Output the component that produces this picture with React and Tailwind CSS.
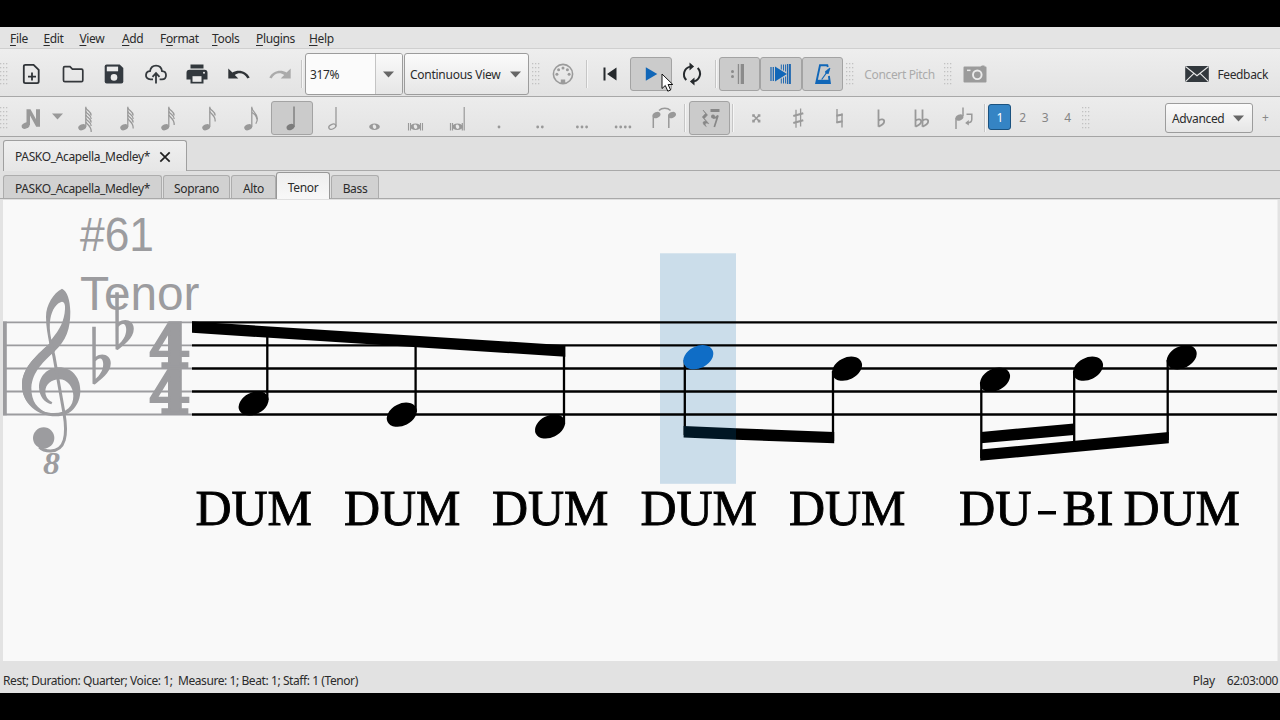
import clsx from "clsx"

const MENUS = [
  { pre: "", key: "F", rest: "ile", width: "w-[33.5px]" },
  { pre: "", key: "E", rest: "dit", width: "w-9" },
  { pre: "", key: "V", rest: "iew", width: "w-[42.5px]" },
  { pre: "", key: "A", rest: "dd", width: "w-[38px]" },
  { pre: "F", key: "o", rest: "rmat", width: "w-[52px]" },
  { pre: "", key: "T", rest: "ools", width: "w-[44px]" },
  { pre: "", key: "P", rest: "lugins", width: "w-[53px]" },
  { pre: "", key: "H", rest: "elp", width: "w-[40px]" },
]

const Grip = ({ className }) => (
  <svg className={clsx("h-6 w-2 shrink-0", className)} viewBox="0 0 8 24" fill="#c2c2c2">
    {[1, 5, 9, 13, 17, 21].map((y) => (
      <g key={y}>
        <rect x="0" y={y} width="1.3" height="1.3" />
        <rect x="3" y={y} width="1.3" height="1.3" />
        <rect x="6" y={y} width="1.3" height="1.3" />
      </g>
    ))}
  </svg>
)

const Divider = () => <div className="h-7 w-[2px] shrink-0 border-l border-[#c6c6c6] bg-[#f6f6f6]" />

const Slot = ({ children, active, className }) => (
  <div
    className={clsx(
      "flex shrink-0 items-center justify-center",
      active && "rounded-[3px] border border-[#a3a3a3] bg-[#cbcbcb]",
      className
    )}
  >
    {children}
  </div>
)

const Arrow = ({ className }) => (
  <svg className={clsx("h-[7px] w-[11px] shrink-0", className)} viewBox="0 0 11 7">
    <path d="M0 .4h11L5.5 6.6z" fill="currentColor" />
  </svg>
)

const Glyph = ({ children }) => (
  <svg className="h-6 w-6 shrink-0 overflow-visible" viewBox="0 0 24 24" fill="none">
    {children}
  </svg>
)

const NewIcon = () => (
  <Glyph>
    <path d="M5.4 2.8h8.2l5.1 5v11.8q0 1.6-1.6 1.6H5.4q-1.6 0-1.6-1.6V4.4q0-1.6 1.6-1.6z" stroke="#2f3337" strokeWidth="1.8" />
    <path d="M12 10.6v8M8 14.6h8" stroke="#2f3337" strokeWidth="1.8" />
  </Glyph>
)

const OpenIcon = () => (
  <Glyph>
    <path d="M3.8 4.6H9l2.4 2.5h9.1q1.3 0 1.3 1.3v9.8q0 1.5-1.4 1.5H3.9q-1.4 0-1.4-1.5V6q0-1.4 1.3-1.4z" stroke="#34373b" strokeWidth="1.7" />
  </Glyph>
)

const SaveIcon = () => (
  <Glyph>
    <path d="M4.6 2.5h13.1l3.6 3.6v13.5q0 1.9-1.9 1.9H4.6q-1.9 0-1.9-1.9V4.4q0-1.9 1.9-1.9z" fill="#343a40" />
    <path d="M4.8 4.6h11.3v4.7H4.8z" fill="#ebebeb" />
    <circle cx="12" cy="15.4" r="3.3" fill="#ebebeb" />
  </Glyph>
)

const CloudIcon = () => (
  <Glyph>
    <path d="M9 17.3H6.4C3.2 17.3 1.8 15.2 2 13c.2-2.1 1.8-3.8 4-3.8C6.6 5.8 9 3.6 12 3.6c3.2 0 5.6 2.3 6 5.5 2.2.1 4 1.7 4 4.1s-1.6 4.1-4 4.1h-2.4" stroke="#34393d" strokeWidth="1.8" />
    <path d="M12 21.5v-10M8.5 14.8l3.5-3.7 3.5 3.7" stroke="#34393d" strokeWidth="1.8" />
  </Glyph>
)

const PrintIcon = () => (
  <Glyph>
    <path d="M5.5 2.5h13v4h-13z" fill="#32383d" />
    <path d="M4.5 7.8h15q3 0 3 3v6.6h-4v4.1h-13v-4.1h-4v-6.6q0-3 3-3z" fill="#32383d" />
    <path d="M7.500 14.200h9v5.600h-9z" fill="#ebebeb" />
    <circle cx="19" cy="10.8" r="1" fill="#ebebeb" />
  </Glyph>
)

const UndoIcon = () => (
  <Glyph>
    <path d="M1.3 6.600v10h10l-3.500-3.600c4-3.300 9.700-2.300 12.600 3.500l2.300-.9C19.300 8.700 11.300 7 5.400 10.500z" fill="#2f3337" />
  </Glyph>
)

const RedoIcon = () => (
  <Glyph>
    <path d="M22.700 6.600v10h-10l3.500-3.600c-4-3.300-9.700-2.300-12.600 3.500l-2.300-.9C4.700 8.700 12.700 7 18.600 10.500z" fill="#ababab" />
  </Glyph>
)

const MidiIcon = () => (
  <Glyph>
    <circle cx="12" cy="12" r="9.600" stroke="#9b9b9b" strokeWidth="1.600" />
    <g fill="#9b9b9b">
      <circle cx="12" cy="6" r="1.500" />
      <circle cx="7.600" cy="7.800" r="1.500" />
      <circle cx="16.400" cy="7.800" r="1.500" />
      <circle cx="5.900" cy="12.200" r="1.500" />
      <circle cx="18.100" cy="12.200" r="1.500" />
      <path d="M9.800 17.500h4.400v3.800H9.800z" />
    </g>
  </Glyph>
)

const LoopIcon = () => (
  <Glyph>
    <path d="M6.300 18A8 8 0 0 1 10 4.600M17.700 6A8 8 0 0 1 14 19.400" stroke="#25292c" strokeWidth="2" />
    <path d="M9.500.6v8l4.600-4zM14.500 23.400v-8l-4.600 4z" fill="#25292c" />
  </Glyph>
)

const RepeatIcon = () => (
  <Glyph>
    <g fill="#8b8b8b">
      <circle cx="4.500" cy="9.600" r="1.500" />
      <circle cx="4.500" cy="14.600" r="1.500" />
      <rect x="9.800" y="2" width="1.300" height="20" />
      <rect x="12.700" y="2" width="3.300" height="20" />
    </g>
  </Glyph>
)

const PanIcon = () => (
  <Glyph>
    <path d="M2 5v14M4.300 5v14M18.600 2v20" stroke="#2068b0" strokeWidth="1.300" />
    <path d="M20.900 2v20" stroke="#2068b0" strokeWidth="2" />
    <path d="M6 4.500 18 12 6 19.500z" fill="#1167b8" />
    <path d="M12.300 2.500v5M14.500 2.500v6M16.600 2.500v7M12.300 16.500v5M14.500 15.500v6M16.600 14.500v7" stroke="#2068b0" strokeWidth="1" />
  </Glyph>
)

const MetronomeIcon = () => (
  <Glyph>
    <path d="M16.800 5 16.300 3.200H9L5.200 21h13.700l-1-7" stroke="#1167b8" strokeWidth="1.900" />
    <path d="M5.500 17.800h13v3.500h-13z" fill="#1167b8" />
    <path d="M10.700 17.500 19 6" stroke="#1167b8" strokeWidth="1.200" />
    <path d="m14 9.500 3.600-3 1.400 1-1.500 4.500-3-.4z" fill="#1167b8" />
  </Glyph>
)

const CameraIcon = () => (
  <Glyph>
    <path d="M1.500 4.600h16l1.500-1.100h2.500v1.100h1.100q.9 0 .9 1v14q0 1-1 1h-21q-1 0-1-1v-14q0-1 1-1z" fill="#9b9b9b" />
    <circle cx="14.300" cy="12.800" r="4.300" stroke="#ebebeb" strokeWidth="1.900" />
    <path d="M4 7.600h3.500v1.500H4z" fill="#ebebeb" />
  </Glyph>
)

const MailIcon = () => (
  <Glyph>
    <path d="M.2 4h23.600v16H.2z" fill="#32383d" />
    <path d="m.5 4.500 11.500 9.300L23.500 4.500M.5 19.600l8.400-8.200M23.500 19.600l-8.400-8.200" stroke="#e8e8e8" strokeWidth="1.100" />
  </Glyph>
)

/* small symbols of the note input bar, 40x36 with 20,18 in the middle */
const Sym = ({ children, color = "#999999" }) => (
  <svg className="h-9 w-10 shrink-0 overflow-visible" viewBox="0 0 40 36" fill="none" stroke={color} style={{ color }}>
    {children}
  </svg>
)

const Head = ({ x, y }) => (
  <ellipse cx={x} cy={y} rx="4.100" ry="2.900" transform={`rotate(-24 ${x} ${y})`} fill="currentColor" stroke="none" />
)

const FlaggedNote = ({ flags }) => (
  <Sym>
    <Head x={17.2} y={27.2} />
    <path d="M20.800 6.800v20" strokeWidth="1.300" />
    {flags === 1 ? (
      <path d="M20.900 8c.5 4 5.500 5.500 5.500 10.500 0 2.200-.7 3.800-1.600 5.300M20.900 12.500c3 1.500 4.800 3.500 5 7" strokeWidth="1.200" />
    ) : (
      Array.from({ length: flags }, (_, i) => (
        <path key={i} d={`M20.900 ${8 + i * 3.5}c1 2.800 5.600 3.800 5.300 ${i === flags - 1 ? 10 : 7.5}`} strokeWidth="1.300" />
      ))
    )}
  </Sym>
)

const FlatShape = ({ x = 0 }) => (
  <g transform={`translate(${x} 0)`}>
    <path d="M17 9.500v17.200M17 21c2.500-3 6.200-1.600 5.600 1-.4 2-3 3.500-5.600 4.700" strokeWidth="1.800" />
  </g>
)

const Dots = ({ count }) => (
  <Sym>
    {Array.from({ length: count }, (_, i) => (
      <circle key={i} cx={20 + (i - (count - 1) / 2) * 4.6} cy="27" r="1.400" fill="currentColor" stroke="none" />
    ))}
  </Sym>
)

const Whole = ({ x = 19.5 }) => (
  <g>
    <ellipse cx={x} cy="26.700" rx="5.300" ry="3.200" fill="currentColor" stroke="none" />
    <ellipse cx={x} cy="26.700" rx="1.700" ry="2.300" fill="#e8e8e8" stroke="none" transform={`rotate(-20 ${x} 26.7)`} />
  </g>
)

const InputBar = () => (
  <div className="flex h-10 items-center border-b border-[#a5a5a5] bg-gradient-to-b from-[#ececec] to-[#e4e4e4] pt-[3px]">
    <Grip />
    <Slot className="ml-[3px] w-10">
      <Sym>
        <path d="M15.500 9.300h4l5.500 10v-10h4v17.400h-3.800L19 15.500V25h-3.500z" fill="currentColor" stroke="none" />
        <Head x={14.6} y={25.6} />
      </Sym>
    </Slot>
    <Slot className="w-[13.500px] text-[#999999]">
      <Arrow className="-mt-1" />
    </Slot>
    {[5, 4, 3, 2, 1].map((n) => (
      <Slot key={n} className="w-[41.400px]">
        <FlaggedNote flags={n} />
      </Slot>
    ))}
    <Slot active className="h-[34px] w-[41.400px]">
      <Sym color="#7c7c7c">
        <Head x={18.5} y={27} />
        <path d="M22 6.500v20.500" strokeWidth="1.400" />
      </Sym>
    </Slot>
    <Slot className="w-[41.400px]">
      <Sym>
        <ellipse cx="18.300" cy="26.700" rx="3.700" ry="2.300" transform="rotate(-25 18.300 26.700)" strokeWidth="1.300" />
        <path d="M22 7v19.500" strokeWidth="1.300" />
      </Sym>
    </Slot>
    <Slot className="w-[41.400px]">
      <Sym>
        <Whole />
      </Sym>
    </Slot>
    <Slot className="w-[41.400px]">
      <Sym>
        <Whole />
        <path d="M12.500 23v7.400M14.500 23v7.400M24.500 23v7.400M26.500 23v7.400" strokeWidth="1.100" />
      </Sym>
    </Slot>
    <Slot className="w-[41.400px]">
      <Sym>
        <Whole />
        <path d="M12.500 23v7.400M14.500 23v7.400M24.300 23v7.400M26.200 7v23.400" strokeWidth="1.200" />
      </Sym>
    </Slot>
    {[1, 2, 3, 4].map((n) => (
      <Slot key={n} className="w-[41.400px]">
        <Dots count={n} />
      </Slot>
    ))}
    <Slot className="w-[41.400px]">
      <Sym>
        <Head x={11.5} y={15} />
        <Head x={27} y={15} />
        <path d="M8.300 15.500V28M23.800 15.500V28" strokeWidth="1.500" />
        <path d="M14 10.500c3-3 8.500-3 11.500 0" strokeWidth="1.500" />
      </Sym>
    </Slot>
    <div className="-ml-px">
      <Divider />
    </div>
    <Slot active className="ml-[3px] mr-[2px] h-[34px] w-[41px]">
      <Sym color="#878787">
        <path d="m13 10 4.500 5-3.200 3.500 4.500 5.200c-3-1.400-5-.2-2.500 2.800-4.500-2.500-4-6 0-5l-4-4.500 3.200-3.500z" fill="currentColor" strokeWidth=".6" />
        <path d="M20.500 10.500h9" strokeWidth="3" />
        <circle cx="23" cy="16.500" r="2" fill="currentColor" stroke="none" />
        <path d="M23 18c2.500 0 4-.8 5-2.500l-3.700 11.500" strokeWidth="1.700" />
      </Sym>
    </Slot>
    <Divider />
    <Slot className="ml-px w-[42px]">
      <Sym>
        <path d="m17.300 15.300 6 6M23.300 15.300l-6 6" strokeWidth="1.600" />
        <path d="M16.200 14.200h2.600v2.600h-2.600zM21.800 14.200h2.600v2.600h-2.600zM16.200 19.800h2.600v2.600h-2.600zM21.800 19.800h2.600v2.600h-2.600z" fill="currentColor" stroke="none" />
      </Sym>
    </Slot>
    <Slot className="w-[41.400px]">
      <Sym>
        <path d="M18 9.700v18M22.600 8.500v18" strokeWidth="1.300" />
        <path d="m15.300 16 10-2.800M15.300 23l10-2.800" strokeWidth="2.200" />
      </Sym>
    </Slot>
    <Slot className="w-[41.400px]">
      <Sym>
        <path d="M18 9v14M23 13.500v14" strokeWidth="1.400" />
        <path d="m17.400 15.700 6.200-1.200M17.400 22.500l6.200-1.200" strokeWidth="2.100" />
      </Sym>
    </Slot>
    <Slot className="w-[41.400px]">
      <Sym>
        <FlatShape x={0.5} />
      </Sym>
    </Slot>
    <Slot className="w-[41.400px]">
      <Sym>
        <FlatShape x={-3.5} />
        <FlatShape x={3.5} />
      </Sym>
    </Slot>
    <Slot className="w-[41.400px]">
      <Sym>
        <Head x={15.5} y={17.5} />
        <path d="M12 18v11M19 7.500v8.500" strokeWidth="1.500" />
        <path d="M22.500 14.300h5.300v4.900q0 3.500-4 3.500" strokeWidth="1.500" />
        <path d="m24.800 20-3.700 2.900 3.700 2.500z" fill="currentColor" stroke="none" />
      </Sym>
    </Slot>
    <Divider />
    <div className="-mt-0.5 ml-0.5 flex h-[26px] w-[23px] shrink-0 items-center justify-center rounded-[3px] border border-[#1b527f] bg-[#3584c4] pt-0.5 text-white">
      1
    </div>
    <div className="flex items-center text-[#858585]">
      <span className="w-[22.500px] text-center">2</span>
      <span className="w-[22.500px] text-center">3</span>
      <span className="w-[22.500px] text-center">4</span>
    </div>
    <Grip className="ml-[3px]" />
    <div className="ml-auto mr-[9px] flex h-[30px] w-[88px] shrink-0 items-center justify-between rounded-[3px] border border-[#9c9c9c] bg-gradient-to-b from-[#fbfbfb] to-[#e6e6e6] px-1.5 pr-2">
      <span className="pt-0.5">Advanced</span>
      <Arrow className="text-[#666666]" />
    </div>
    <span className="mr-2.5 w-2 text-[#888888]">+</span>
  </div>
)

const FileBar = () => (
  <div className="flex h-[49px] items-center border-y border-t-[#cfcfcf] border-b-[#a8a8a8] bg-gradient-to-b from-[#eeeeee] to-[#e3e3e3] pt-[3px]">
    <Grip />
    <div className="ml-[3px] flex">
      {[NewIcon, OpenIcon, SaveIcon, CloudIcon, PrintIcon, UndoIcon, RedoIcon].map((Icon, i) => (
        <Slot key={i} className="w-[41.400px]">
          <Icon />
        </Slot>
      ))}
    </div>
    <div className="ml-[.2px]">
      <Divider />
    </div>
    <div className="ml-[2px] flex h-[42px] w-[98px] shrink-0 overflow-hidden rounded-[3px] border border-[#9c9c9c] bg-[#fbfbfb]">
      <div className="flex flex-1 items-center border-r border-[#c4c4c4] pl-1 pt-0.5">317%</div>
      <div className="flex w-[26px] items-center justify-center bg-gradient-to-b from-[#fafafa] to-[#e6e6e6] text-[#666666]">
        <Arrow />
      </div>
    </div>
    <div className="ml-px flex h-[42px] w-[125px] shrink-0 items-center justify-between rounded-[3px] border border-[#9c9c9c] bg-gradient-to-b from-[#fbfbfb] to-[#e6e6e6] px-[5px] pr-[7px]">
      <span className="pt-0.5 tracking-[-0.25px]">Continuous View</span>
      <Arrow className="text-[#666666]" />
    </div>
    <Grip className="ml-[3px]" />
    <Slot className="ml-[3px] w-10">
      <MidiIcon />
    </Slot>
    <div className="ml-[3px]">
      <Divider />
    </div>
    <Slot className="ml-[1px] w-[41.400px]">
      <Glyph>
        <path d="M5.500 5.500h2v13h-2zM18.500 5.500v13L9 12z" fill="#25292c" />
      </Glyph>
    </Slot>
    <Slot active className="relative h-[34px] w-[41.400px]">
      <Glyph>
        <path d="M6.800 5.200 18.300 12 6.800 18.800z" fill="#1167b8" />
      </Glyph>
      <svg className="absolute left-[30px] top-[15px] z-10 h-5 w-[14px]" viewBox="0 0 14 20">
        <path d="M1 1v14.500l3.300-3 2.500 5.700 2.800-1.200-2.500-5.500h4.700z" fill="#ffffff" stroke="#111111" strokeWidth="1" />
      </svg>
    </Slot>
    <Slot className="w-[41.400px]">
      <LoopIcon />
    </Slot>
    <div className="ml-[1.500px] mr-[2.500px]">
      <Divider />
    </div>
    <div className="flex">
      <Slot active className="h-[34px] w-[41.400px]">
        <RepeatIcon />
      </Slot>
      <Slot active className="h-[34px] w-[41.400px]">
        <PanIcon />
      </Slot>
      <Slot active className="h-[34px] w-[41.400px]">
        <MetronomeIcon />
      </Slot>
    </div>
    <Grip className="ml-[3px]" />
    <span className="ml-2.5 w-20 whitespace-nowrap pt-0.5 text-[#ababab]">Concert Pitch</span>
    <Grip />
    <Slot className="ml-[11px] w-6">
      <CameraIcon />
    </Slot>
    <div className="ml-auto mr-3 flex items-center gap-2">
      <MailIcon />
      <span className="pt-0.5">Feedback</span>
    </div>
  </div>
)

const PARTS = [
  { name: "PASKO_Acapella_Medley*", width: "w-[159px]" },
  { name: "Soprano", width: "w-[67px]" },
  { name: "Alto", width: "w-[45px]" },
  { name: "Tenor", width: "w-[54px]", active: true },
  { name: "Bass", width: "w-[48px]" },
]

const Tabs = () => (
  <div className="h-[63px] bg-[#e0e0e0] pt-[3px]">
    <div className="flex h-[31px]">
      <div className="w-[3px]" />
      <div className="flex w-[184px] items-center rounded-t-[3px] border border-b-0 border-[#9f9f9f] bg-gradient-to-b from-[#efefef] to-[#e6e6e6] pl-[11px] pt-0.5">
        <span className="w-[144px] whitespace-nowrap">PASKO_Acapella_Medley*</span>
        <svg className="h-3 w-3" viewBox="0 0 12 12">
          <path d="m1.300 1.300 9.400 9.400M10.700 1.300l-9.400 9.400" stroke="#202020" strokeWidth="1.700" />
        </svg>
      </div>
      <div className="flex-1 border-b border-[#a9a9a9]" />
    </div>
    <div className="flex h-7 items-end border-b border-[#a9a9a9] pl-0.5">
      {PARTS.map((part) => (
        <div
          key={part.name}
          className={clsx(
            "flex items-center justify-center whitespace-nowrap rounded-t-[3px] border border-b-0",
            part.width,
            part.active ? "-mb-px h-[27px] border-[#989898] bg-gradient-to-b from-[#eeeeee] to-[#f8f8f8] pt-1" : "ml-px h-[23px] border-[#adadad] bg-[#d1d1d1] pt-1"
          )}
        >
          {part.name}
        </div>
      ))}
    </div>
  </div>
)

const NOTES = [
  { x: 253.6, y: 203.4 },
  { x: 401.8, y: 214.7 },
  { x: 550, y: 226.5 },
  { x: 698.3, y: 157.2, playing: true },
  { x: 847, y: 168.7 },
  { x: 995, y: 179.7 },
  { x: 1088, y: 168.7 },
  { x: 1181.7, y: 157.3 },
]

const LYRICS = [
  { x: 195.5, w: 116.5, text: "DUM" },
  { x: 344, w: 116.5, text: "DUM" },
  { x: 492, w: 116.5, text: "DUM" },
  { x: 640.5, w: 116.5, text: "DUM" },
  { x: 789, w: 116.5, text: "DUM" },
  { x: 959, w: 72.5, text: "DU" },
  { x: 1062.5, w: 51, text: "BI" },
  { x: 1123.5, w: 116.5, text: "DUM" },
]

const STAFF = [122.4, 145.4, 168.5, 191.5, 214.5]

const KeyFlat = ({ x, y }) => (
  <g transform={`translate(${x} ${y})`}>
    <path
      fillRule="evenodd"
      d="M0 0h3.600v30C9 25.500 18.600 27.500 18.600 36.500 18.600 46 8 53 2.500 57.800L.3 57zM3.500 34.500V52C7 49 11 44 11 37.500 11 30.500 6.500 30.500 3.500 34.500z"
    />
  </g>
)

const Score = () => (
  <svg className="block h-full w-full" viewBox="0 0 1280 461">
    <rect x="3" width="1274.500" height="461" fill="#f9f9f9" />
    <rect x="660" y="53.300" width="76" height="230.500" fill="#cbddea" />

    <g stroke="#000000" strokeWidth="2.300">
      {STAFF.map((y) => (
        <path key={y} d={`M192 ${y}H1277`} />
      ))}
      <path d="M267.300 136V200M415.600 146V212M564 146V224" />
      <path d="M684.800 160v75M833 171v70M981.300 182v76M1074.200 171v70M1167.700 160v80" />
    </g>
    <path d="M192 121.500 565.300 145.200V156.800L192 132.800z" />
    <path d="M736 228.200 834.200 232V243.200L736 239.700z" />
    <path d="M683.600 226 736 228.200V239.700L683.600 237.500z" fill="#001624" />
    <path d="M981 232 1074 223.500V235L981 243.300z" />
    <path d="M980.200 249.500 1168.800 232V243.200L980.200 260.700z" />
    {NOTES.map((n) => (
      <ellipse
        key={n.x}
        cx={n.x}
        cy={n.y}
        rx="15.900"
        ry="10.900"
        transform={`rotate(-27 ${n.x} ${n.y})`}
        fill={n.playing ? "#0f6dc6" : "#000000"}
      />
    ))}

    {/* continuous view header */}
    <g fill="#9c9c9f">
      <g stroke="#9c9c9f" strokeWidth="1.900">
        {STAFF.map((y) => (
          <path key={y} d={`M3 ${y}H192`} />
        ))}
      </g>
      <path d="M3 121.500h3.800v93.800H3z" />
      <g fontFamily="Liberation Sans, sans-serif" fontSize="47.500" letterSpacing="0">
        <text x="80" y="50.500" textLength="74" lengthAdjust="spacingAndGlyphs">#61</text>
        <text x="80" y="109.700" textLength="119.500" lengthAdjust="spacingAndGlyphs">Tenor</text>
      </g>
      <g transform="translate(0 5) scale(.33333)">
        <path
          fillRule="evenodd"
          d="M186 251C160 264 138 300 138 335 138 365 143 388 148 416 105 455 66 490 66 540 66 595 112 634 168 634 213 634 241 598 241 557 241 514 212 487 177 487 143 487 117 514 117 547 117 574 135 594 154 598L157 592C143 584 136 573 136 560 136 538 154 523 178 523 202 523 220 546 220 573 220 603 201 624 162 624 115 624 80 591 80 548 80 505 117 475 162 441 200 405 211 370 211 320 210 285 202 258 186 251zM186 290C194 291 196 301 195 313 193 347 180 374 154 404 149 380 148 358 151 342 156 313 170 293 186 290z"
        />
        <path d="M66 540C66 490 105 455 148 416L165 438C132 468 97 500 94 548 94 590 112 612 145 625 90 616 66 580 66 540z" />
        <path d="M151 405 162 455 192 625C203 690 196 737 152 738 140 738 126 735 118 726" fill="none" stroke="#9c9c9f" strokeWidth="9" />
        <circle cx="131" cy="699" r="32" />
      </g>
      <KeyFlat x={92.2} y={126.8} />
      <KeyFlat x={115.2} y={92.3} />
      <g fontFamily="DejaVu Serif, serif" fontWeight="bold" fontSize="59" letterSpacing="0" stroke="#9c9c9f" strokeWidth="2.600">
        <text x="148.500" y="167" textLength="42" lengthAdjust="spacingAndGlyphs">4</text>
        <text x="148.500" y="213.300" textLength="42" lengthAdjust="spacingAndGlyphs">4</text>
      </g>
      <text x="43" y="273.500" fontFamily="Liberation Serif, serif" fontWeight="bold" fontStyle="italic" fontSize="31" letterSpacing="0" textLength="17" lengthAdjust="spacingAndGlyphs">8</text>
    </g>

    <g fontFamily="Liberation Serif, serif" fontSize="51.500" letterSpacing="0" stroke="#000000" strokeWidth=".9">
      {LYRICS.map((l) => (
        <text key={l.x} x={l.x} y="325" textLength={l.w} lengthAdjust="spacingAndGlyphs">
          {l.text}
        </text>
      ))}
    </g>
    <path d="M1038 311h18v3.500h-18z" />
  </svg>
)

const App = () => {
  return (
    <div className="flex h-[720px] w-[1280px] flex-col overflow-hidden bg-black py-[27px] font-['Noto_Sans',sans-serif] text-[12px] leading-4 tracking-[-0.35px] text-[#2b2b2b]">
      <div className="flex h-[21px] shrink-0 items-center bg-[#e4e4e4] pl-2.5 pt-0.5">
        {MENUS.map((m) => (
          <div key={m.key} className={clsx("shrink-0 whitespace-nowrap", m.width)}>
            {m.pre}
            <span className="underline underline-offset-2">{m.key}</span>
            {m.rest}
          </div>
        ))}
      </div>
      <FileBar />
      <InputBar />
      <Tabs />
      <div className="h-[461px] shrink-0 bg-[#e3e3e3]">
        <Score />
      </div>
      <div className="flex flex-1 items-center justify-between bg-[#e2e2e2] pl-[3px] pr-0.5 pt-[7px]">
        <span className="whitespace-pre tracking-[-0.42px]">Rest; Duration: Quarter; Voice: 1;  Measure: 1; Beat: 1; Staff: 1 (Tenor)</span>
        <div className="flex gap-3">
          <span>Play</span>
          <span>62:03:000</span>
        </div>
      </div>
    </div>
  )
}

export default App
